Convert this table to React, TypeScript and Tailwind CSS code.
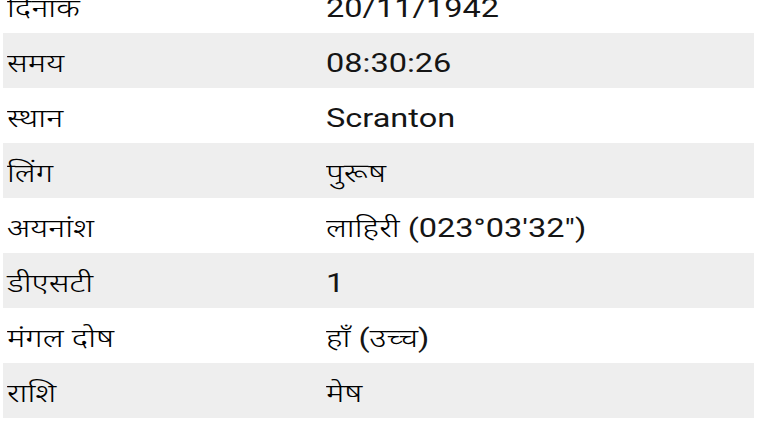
import React from "react";

const rows: [string, string][] = [
  ["दिनांक", "20/11/1942"],
  ["समय", "08:30:26"],
  ["स्थान", "Scranton"],
  ["लिंग", "पुरूष"],
  ["अयनांश", "लाहिरी (023°03'32\")"],
  ["डीएसटी", "1"],
  ["मंगल दोष", "हाँ (उच्च)"],
  ["राशि", "मेष"],
];

function Mixed({ text }: { text: string }) {
  const parts = text.split(/([\u0900-\u097F]+)/).filter((p) => p.length > 0);
  return (
    <>
      {parts.map((p, i) =>
        /[\u0900-\u097F]/.test(p) ? (
          <span key={i} className="font-[350] text-[#000000]">
            {p}
          </span>
        ) : (
          <span key={i} className="font-normal">
            {p}
          </span>
        )
      )}
    </>
  );
}

export default function App() {
  return (
    <div
      className="w-[759px] h-[422px] overflow-hidden bg-white text-[#151515]"
      style={{ fontFamily: 'Roboto, "Noto Sans Devanagari", "Lohit Devanagari", "Noto Sans", sans-serif' }}
    >
      <div className="-mt-[22px] ml-[3px] mr-[5px] flex flex-col">
        {rows.map(([k, v], i) => (
          <div
            key={k}
            className={`flex items-center h-[55px] pl-[4px] pt-[8px] ${i % 2 === 1 ? "bg-[#eeeeee]" : "bg-white"}`}
          >
            <div className="w-[319px] shrink-0">
              <span className="inline-block origin-left scale-x-[1.25] text-[26px] leading-none">
                <Mixed text={k} />
              </span>
            </div>
            <div>
              <span className="inline-block origin-left scale-x-[1.25] text-[26px] leading-none">
                <Mixed text={v} />
              </span>
            </div>
          </div>
        ))}
      </div>
    </div>
  );
}
